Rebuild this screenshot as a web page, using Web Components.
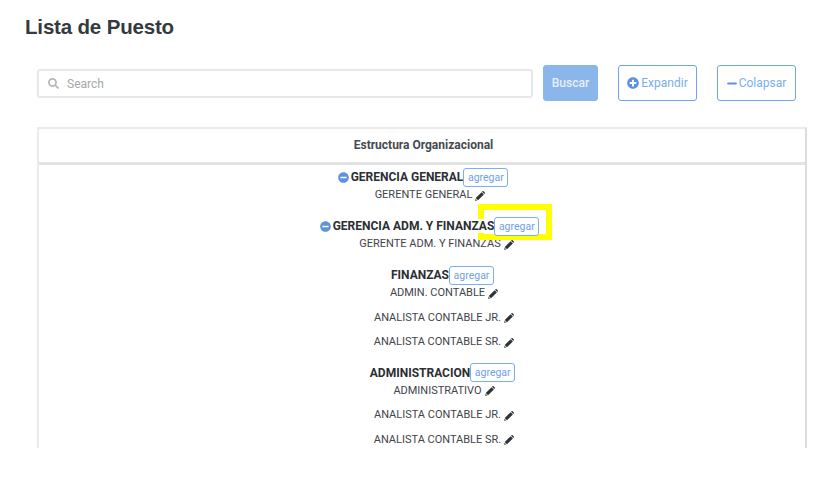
<!DOCTYPE html>
<html lang="es">
<head>
<meta charset="utf-8">
<title>Lista de Puesto</title>
<style>
  html, body { margin: 0; height: 100%; background: #fff; overflow: hidden; }
  body { font-family: Roboto, "Liberation Sans", sans-serif; color: #343a40; }
</style>
</head>
<body>
<puesto-page>
  <puesto-toolbar slot="toolbar"></puesto-toolbar>
  <puesto-table slot="table" heading="Estructura Organizacional">
    <puesto-area name="GERENCIA GENERAL" level="0" collapsible>
      <puesto-role>GERENTE GENERAL</puesto-role>
    </puesto-area>
    <puesto-area name="GERENCIA ADM. Y FINANZAS" level="1" collapsible>
      <puesto-role>GERENTE ADM. Y FINANZAS</puesto-role>
    </puesto-area>
    <puesto-area name="FINANZAS" level="2">
      <puesto-role>ADMIN. CONTABLE</puesto-role>
      <puesto-role>ANALISTA CONTABLE JR.</puesto-role>
      <puesto-role>ANALISTA CONTABLE SR.</puesto-role>
    </puesto-area>
    <puesto-area name="ADMINISTRACION" level="2">
      <puesto-role>ADMINISTRATIVO</puesto-role>
      <puesto-role>ANALISTA CONTABLE JR.</puesto-role>
      <puesto-role>ANALISTA CONTABLE SR.</puesto-role>
    </puesto-area>
  </puesto-table>
</puesto-page>

<script>
const pencilIcon = `<svg viewBox="0 0 512 512" width="10" height="10" aria-hidden="true"><path fill="#2f3336" d="M154 474 38 358 338 58 454 174zM362 34l32-30c14-10 32-8 44 3l66 66c11 13 12 30 2 43l-30 32z"/><path fill="#6b6f72" d="M22 380 132 490 0 512z"/></svg>`;
const minusCircle = (color, size) => `<svg viewBox="0 0 512 512" width="${size}" height="${size}" aria-hidden="true"><path fill="${color}" d="M256 8C119 8 8 119 8 256s111 248 248 248 248-111 248-248S393 8 256 8zM124 296c-6.600 0-12-5.400-12-12v-56c0-6.600 5.400-12 12-12h264c6.600 0 12 5.400 12 12v56c0 6.600-5.400 12-12 12H124z"/></svg>`;
const plusCircle = (color, size) => `<svg viewBox="0 0 512 512" width="${size}" height="${size}" aria-hidden="true"><path fill="${color}" d="M256 8C119 8 8 119 8 256s111 248 248 248 248-111 248-248S393 8 256 8zm144 276c0 6.600-5.400 12-12 12h-92v92c0 6.600-5.400 12-12 12h-56c-6.600 0-12-5.400-12-12v-92h-92c-6.600 0-12-5.400-12-12v-56c0-6.600 5.400-12 12-12h92v-92c0-6.600 5.400-12 12-12h56c6.600 0 12 5.400 12 12v92h92c6.600 0 12 5.400 12 12v56z"/></svg>`;

class PuestoPage extends HTMLElement {
  connectedCallback() {
    this.attachShadow({ mode: "open" }).innerHTML = `
      <style>
        :host { display: block; position: relative; height: 448px; overflow: hidden; }
        h1 {
          margin: 0; padding: 16px 0 0 25px; height: 49px; letter-spacing: -0.17px;
          font: 700 20.500px/22px "Liberation Sans", Arial, sans-serif; color: #343a40;
        }
        .content { padding: 0 14px 0 37px; }
        .highlight {
          position: absolute; left: 478px; top: 204px; width: 74px; height: 36px; box-sizing: border-box;
          border: 6px solid #ffff00; pointer-events: none;
        }
      </style>
      <h1>Lista de Puesto</h1>
      <div class="content">
        <slot name="toolbar"></slot>
        <slot name="table"></slot>
      </div>
      <div class="highlight"></div>`;
  }
}

class PuestoToolbar extends HTMLElement {
  connectedCallback() {
    this.attachShadow({ mode: "open" }).innerHTML = `
      <style>
        :host { display: flex; align-items: center; height: 36px; margin-bottom: 26px; font-size: 12px; }
        .search {
          box-sizing: border-box; width: 496px; height: 29px; margin-right: 10px;
          display: flex; align-items: center; gap: 8px; padding: 1px 0 0 9px;
          border: 2px solid #e6e7e8; border-radius: 3px; color: #a4a8ac;
        }
        .btn {
          box-sizing: border-box; height: 36px; display: flex; align-items: center; justify-content: center;
          border-radius: 3px; border: 1px solid #6ea5ea; color: #7aaeee; background: #fff; gap: 2px;
        }
        .buscar { width: 55px; background: #8ab6ec; border-color: #8ab6ec; color: #e6effb; font-weight: 500; margin-right: 20px; }
        .expandir { width: 79px; margin-right: 20px; }
        .colapsar { width: 79px; }
        svg { display: block; }
      </style>
      <div class="search">
        <svg viewBox="0 0 512 512" width="11" height="11" aria-hidden="true"><path fill="#b4b8bb" d="M505 442.700L405.300 343c-4.500-4.500-10.600-7-17-7H372c27.600-35.300 44-79.700 44-128C416 93.100 322.900 0 208 0S0 93.100 0 208s93.100 208 208 208c48.300 0 92.700-16.400 128-44v16.300c0 6.400 2.500 12.500 7 17l99.700 99.700c9.400 9.400 24.600 9.400 33.900 0l28.300-28.300c9.400-9.400 9.400-24.600.1-34zM208 336c-70.700 0-128-57.200-128-128 0-70.700 57.200-128 128-128 70.700 0 128 57.200 128 128 0 70.700-57.200 128-128 128z"/></svg>
        <span>Search</span>
      </div>
      <div class="btn buscar">Buscar</div>
      <div class="btn expandir">${plusCircle("#5d92dc", 12)}<span>Expandir</span></div>
      <div class="btn colapsar"><svg viewBox="0 0 448 512" width="10" height="11" aria-hidden="true"><path fill="#5d92dc" d="M416 208H32c-17.700 0-32 14.300-32 32v32c0 17.700 14.300 32 32 32h384c17.700 0 32-14.300 32-32v-32c0-17.700-14.300-32-32-32z"/></svg><span>Colapsar</span></div>`;
  }
}

class PuestoTable extends HTMLElement {
  connectedCallback() {
    this.attachShadow({ mode: "open" }).innerHTML = `
      <style>
        :host {
          display: block; box-sizing: border-box; width: 770px; height: 321px;
          border: 2px solid #ebebeb; border-bottom: 0; border-right-color: #dcdcdc;
        }
        .head {
          box-sizing: border-box; height: 36px; padding: 0 0 2px 3px; display: flex; align-items: center; justify-content: center;
          border-bottom: 3px solid #e3e3e3; font-size: 12px; font-weight: 700; color: #454a50;
        }
        .body { padding-top: 2.450px; }
      </style>
      <div class="head">${this.getAttribute("heading")}</div>
      <div class="body"><slot></slot></div>`;
  }
}

// each level sits a bit further right, the way the tree nests in the original
const levelIndent = { 0: [2, 16], 1: [15, 29], 2: [41, 44] };

class PuestoArea extends HTMLElement {
  connectedCallback() {
    const [titleIndent, roleIndent] = levelIndent[this.getAttribute("level")];
    const icon = this.hasAttribute("collapsible")
      ? `<span class="toggle">${minusCircle("#5d92dc", 11)}</span>` : "";
    this.attachShadow({ mode: "open" }).innerHTML = `
      <style>
        :host { display: block; margin-bottom: 3.300px; }
        .title {
          display: flex; align-items: center; justify-content: center; height: 20px; margin-bottom: 1px; padding-left: ${titleIndent}px;
          font-size: 12px; color: #2b2f33; font-weight: 700;
        }
        .toggle { margin-right: 2px; display: flex; }
        .name { position: relative; z-index: 1; background: #fff; line-height: 14px; }
        .add {
          position: relative; z-index: 1; background: #fff;
          box-sizing: border-box; width: 45px; height: 19px; display: flex; align-items: center; justify-content: center;
          border: 1px solid #7aaeee; border-radius: 3px; color: #6f9fe6; font-size: 10.500px; font-weight: 400;
        }
        .roles { padding-left: ${roleIndent}px; }
      </style>
      <div class="title">${icon}<span class="name">${this.getAttribute("name")}</span><span class="add">agregar</span></div>
      <div class="roles"><slot></slot></div>`;
  }
}

class PuestoRole extends HTMLElement {
  connectedCallback() {
    this.attachShadow({ mode: "open" }).innerHTML = `
      <style>
        :host { display: flex; justify-content: center; align-items: flex-start; gap: 3px; height: 24.500px; font-size: 11px; line-height: 14px; color: #3f4449; }
        svg { display: block; margin-top: 2.500px; }
      </style>
      <slot></slot>${pencilIcon}`;
  }
}

customElements.define("puesto-page", PuestoPage);
customElements.define("puesto-toolbar", PuestoToolbar);
customElements.define("puesto-table", PuestoTable);
customElements.define("puesto-area", PuestoArea);
customElements.define("puesto-role", PuestoRole);
</script>
</body>
</html>
